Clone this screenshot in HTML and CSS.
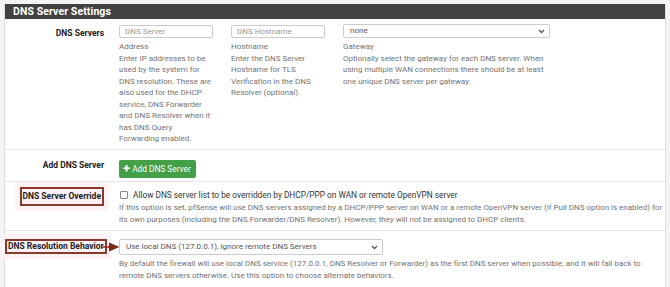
FILE: index.html
```html
<html>
    <head>
        <title>DNS Server Settings</title>
        <meta charset="utf-8">
        <link rel="stylesheet" href="styles.css">
    </head>
    <body>
        <div class="panel">
            <div class="panel-heading">DNS Server Settings</div>

            <div class="row servers">
                <div class="label">DNS Servers</div>
                <div class="fields">
                    <div class="field small">
                        <div class="input">DNS Server</div>
                        <div class="help"><span class="caption">Address</span><br>
                            Enter IP addresses to be used by the system for DNS resolution. These are also used for the DHCP service, DNS Forwarder and DNS Resolver when it has DNS Query Forwarding enabled.</div>
                    </div>
                    <div class="field small">
                        <div class="input">DNS Hostname</div>
                        <div class="help"><span class="caption">Hostname</span><br>
                            Enter the DNS Server Hostname for TLS Verification in the DNS Resolver (optional).</div>
                    </div>
                    <div class="field wide">
                        <div class="select">
                            <span>none</span>
                            <svg class="chevron" width="7" height="5" viewBox="0 0 7 5"><path d="M1 1 L3.5 3.5 L6 1" fill="none" stroke="#555" stroke-width="1.3"/></svg>
                        </div>
                        <div class="help"><span class="caption">Gateway</span><br>
                            Optionally select the gateway for each DNS server. When using multiple WAN connections there should be at least one unique DNS server per gateway.</div>
                    </div>
                </div>
            </div>

            <div class="row add">
                <div class="label">Add DNS Server</div>
                <div class="content">
                    <div class="button"><span class="plus">+</span> Add DNS Server</div>
                </div>
            </div>

            <div class="row override">
                <div class="label"><span class="mark">DNS Server Override</span></div>
                <div class="content">
                    <div class="check-line"><span class="checkbox"></span>Allow DNS server list to be overridden by DHCP/PPP on WAN or remote OpenVPN server</div>
                    <div class="help">If this option is set, pfSense will use DNS servers assigned by a DHCP/PPP server on WAN or a remote OpenVPN server (if Pull DNS option is enabled) for its own purposes (including the DNS Forwarder/DNS Resolver). However, they will not be assigned to DHCP clients.</div>
                </div>
            </div>

            <div class="row behavior">
                <div class="label">
                    <span class="mark">DNS Resolution Behavior</span>
                    <svg class="arrow" width="18" height="10" viewBox="0 0 18 10"><path d="M0 5 H10" stroke="#a0301f" stroke-width="1.6"/><path d="M7 0.5 L17.5 5 L7 9.5 Z" fill="#7a2a16"/></svg>
                </div>
                <div class="content">
                    <div class="select behavior-select">
                        <span>Use local DNS (127.0.0.1), ignore remote DNS Servers</span>
                        <svg class="chevron" width="7" height="5" viewBox="0 0 7 5"><path d="M1 1 L3.5 3.5 L6 1" fill="none" stroke="#555" stroke-width="1.3"/></svg>
                    </div>
                    <div class="help">By default the firewall will use local DNS service (127.0.0.1, DNS Resolver or Forwarder) as the first DNS server when possible, and it will fall back to remote DNS servers otherwise. Use this option to choose alternate behaviors.</div>
                </div>
            </div>
        </div>
    </body>
</html>
```

FILE: styles.css
```css
body
{
    margin: 0;
    background: #f4f4f4;
    font-family: Roboto, "Liberation Sans", sans-serif;
}
.panel
{
    margin: 4px 4px 0 4px;
    background: #ffffff;
    border: 1px solid #dddddd;
    border-top: none;
}
.panel-heading
{
    background: #424242;
    color: #ffffff;
    font-size: 10.5px;
    font-weight: bold;
    line-height: 15px;
    height: 15px;
    padding-left: 8px;
    letter-spacing: 0.1px;
}
.row
{
    display: grid;
    grid-template-columns: 99px 1fr;
    column-gap: 15px;
    border-bottom: 1px solid #e6e6e6;
}
.label
{
    text-align: right;
    font-size: 8.5px;
    font-weight: bold;
    color: #212121;
    line-height: 12px;
    white-space: nowrap;
}
.content
{
    padding: 0 0 3px 0;
}

/* dns servers */
.servers .label
{
    padding-top: 8px;
}
.fields
{
    display: flex;
    gap: 18px;
    padding: 6px 0 4px 0;
}
.field.small
{
    width: 94px;
}
.field.wide
{
    width: 207px;
}
.input
{
    height: 11px;
    border: 1px solid #cccccc;
    border-radius: 2px;
    font-size: 8px;
    line-height: 11px;
    color: #999999;
    padding-left: 5px;
}
.select
{
    position: relative;
    height: 12px;
    border: 1px solid #cccccc;
    border-radius: 2px;
    font-size: 8px;
    line-height: 12px;
    color: #555555;
    padding-left: 6px;
    margin-top: -1px;
}
.chevron
{
    position: absolute;
    right: 4px;
    top: 4px;
}
.help
{
    font-size: 8px;
    line-height: 11.5px;
    color: #737373;
    margin-top: 3px;
}

/* add button */
.add .label
{
    padding-top: 9px;
}
.add .content
{
    padding-top: 10px;
}
.button
{
    display: inline-block;
    background: #43a047;
    color: #ffffff;
    font-size: 8.3px;
    line-height: 18px;
    height: 18px;
    padding: 0 5px 0 4px;
    border-radius: 2px;
}
.plus
{
    font-size: 13px;
    font-weight: bold;
    vertical-align: top;
    line-height: 17px;
}

/* marked labels */
.mark
{
    display: inline-block;
    border: 2px solid #8a3a28;
    background: #fdf1f5;
    box-shadow: 0 0 0 5px #fdf2f6;
    padding: 0 1px;
}
.override .label
{
    padding-top: 5px;
}
.override .mark
{
    line-height: 15px;
}
.override .content
{
    padding-top: 7px;
}
.check-line
{
    font-size: 8.3px;
    color: #333333;
    line-height: 12px;
    display: flex;
    align-items: center;
}
.checkbox
{
    width: 6px;
    height: 6px;
    border: 1px solid #888888;
    border-radius: 1px;
    margin: 0 5px 0 1px;
}
.override .help
{
    line-height: 12.5px;
    margin-top: 1px;
}
.behavior
{
    border-bottom: none;
    padding-bottom: 4px;
}
.behavior .label
{
    position: relative;
    padding-top: 8px;
}
.behavior .mark
{
    line-height: 11px;
}
.arrow
{
    position: absolute;
    right: -16px;
    top: 11px;
}
.behavior .content
{
    padding-top: 8px;
}
.behavior-select
{
    width: 256px;
    height: 14px;
    line-height: 14px;
    margin-top: 0;
}
.behavior-select .chevron
{
    top: 5px;
}
.behavior .help
{
    line-height: 12.5px;
    margin-top: 3px;
}
```
